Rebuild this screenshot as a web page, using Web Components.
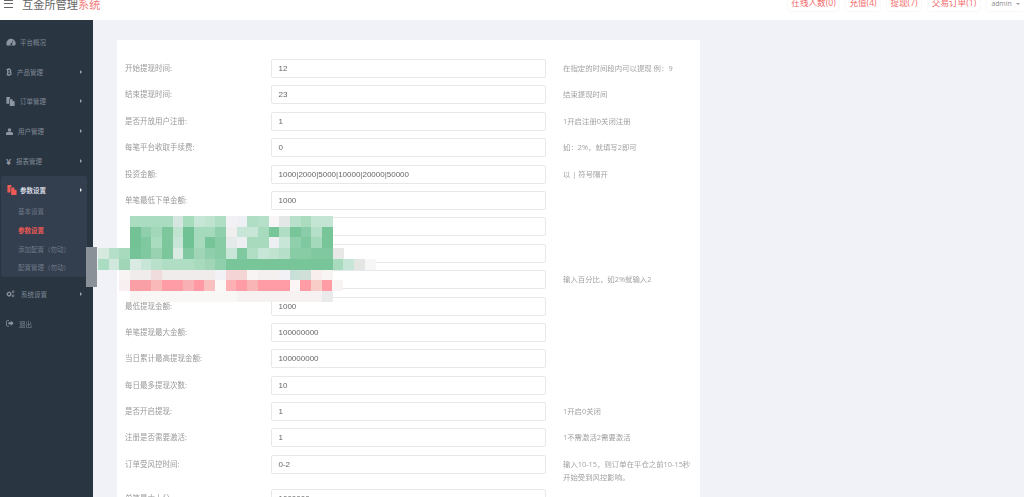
<!DOCTYPE html>
<html lang="zh">
<head>
<meta charset="utf-8">
<title>互金所管理系统</title>
<style>
  html, body { margin: 0; height: 100%; overflow: hidden; background: #f0f2f7; }
  body { font-family: "Open Sans", "Noto Sans CJK SC", sans-serif; }
</style>
</head>
<body>
<admin-app></admin-app>

<script>
const SANS = `"Open Sans", "Noto Sans CJK SC", sans-serif`;

const icons = {
  gauge: `<svg viewBox="0 0 12 10"><path fill="currentColor" fill-rule="evenodd" d="M6 1a5.6 5.6 0 0 0-5.6 5.6c0 1 .3 1.8.7 2.4h9.8c.4-.6.7-1.4.7-2.4A5.6 5.6 0 0 0 6 1zM6.600 6.200 8.400 3l.6.4-1.700 3.200a1.200 1.200 0 1 1-.7-.4z"/></svg>`,
  bitcoin: `<svg viewBox="0 0 8 11"><path fill="currentColor" fill-rule="evenodd" d="M2.400 0h1v1.200h.8V0h1v1.300c1.200.3 2 1 2 2.200 0 .8-.4 1.400-1 1.700.9.3 1.500 1 1.500 2 0 1.400-1 2.300-2.500 2.400V11h-1V9.700h-.8V11h-1V9.700H.6V8.500h.8v-6H.6V1.200h1.800zM3 2.700v2.100h1.500c.7 0 1.100-.4 1.100-1s-.4-1.100-1.100-1.100zm0 3.300v2.400h1.800c.8 0 1.200-.5 1.200-1.200S5.600 6 4.800 6z"/></svg>`,
  files: `<svg viewBox="0 0 12 12"><path fill="currentColor" d="M.5 0h4.800v2.500H4.200V9H.5zM5 3h3.500l3 3v6H5zM8.800 3.400v2.300h2.300z"/></svg>`,
  user: `<svg viewBox="0 0 11 11"><circle cx="5.500" cy="3" r="2.700" fill="currentColor"/><path fill="currentColor" d="M0 11V8.700C0 7.300 1.200 6.300 2.600 6.300h5.800c1.400 0 2.600 1 2.600 2.400V11z"/></svg>`,
  cogs: `<svg viewBox="0 0 13 11"><g fill="none" stroke="currentColor"><circle cx="4.500" cy="6" r="2.400" stroke-width="1.700"/><circle cx="10.300" cy="2.500" r="1.400" stroke-width="1.100"/><circle cx="10.300" cy="8.500" r="1.400" stroke-width="1.100"/></g><g stroke="currentColor" stroke-width="1.200"><path d="M4.500 1.900V3M4.500 9v1.100M.4 6h1.100M7.500 6h1.100M1.600 3.100l.8.8M6.600 8.100l.8.8M1.600 8.900l.8-.8M6.600 3.900l.8-.8"/></g></svg>`,
  logout: `<svg viewBox="0 0 12 10"><path fill="none" stroke="currentColor" stroke-width="1.200" d="M4.500.8H2C1.200.8.700 1.300.700 2v6c0 .7.500 1.200 1.300 1.200h2.500"/><path fill="currentColor" d="M3.500 3.500h3.600V1.200L11.700 5 7.100 8.800V6.500H3.500z"/></svg>`
};

class TopBar extends HTMLElement {
  connectedCallback() {
    const root = this.attachShadow({mode: "open"});
    const links = [["在线人数(0)", 51], ["充值(4)", 34], ["提现(7)", 34], ["交易订单(1)", 52]];
    root.innerHTML = `
      <style>
        :host { display: flex; height: 20px; background: #fff; overflow: hidden; align-items: flex-start; font-family: ${SANS}; }
        .menu { width: 9px; height: 8px; margin: 0 0 0 4px; border-top: 1.300px solid #666; border-bottom: 1.300px solid #666; box-sizing: border-box; position: relative; flex: none; }
        .menu::after { content: ""; position: absolute; left: 0; right: 0; top: 2.050px; height: 1.300px; background: #666; }
        .title { margin: -2px 0 0 9px; font-size: 11.200px; line-height: 14px; color: #666; white-space: nowrap; }
        .title b { font-weight: 400; color: #f47c7c; }
        nav { margin-left: auto; display: flex; gap: 7px; margin-top: -4px; }
        a { display: block; height: 15px; line-height: 15px; font-size: 8.600px; color: #f36a6a; text-align: center; border-radius: 2px; box-shadow: 0 0 2px rgba(0,0,0,.09); white-space: nowrap; }
        .user { width: 37px; color: #8b8b8b; font-size: 6.800px; }
        .user::after { content: ""; display: inline-block; margin-left: 4px; vertical-align: 1px; border: 2px solid transparent; border-top-color: #999; border-bottom: 0; }
      </style>
      <div class="menu"></div>
      <div class="title">互金所管理<b>系统</b></div>
      <nav>
        ${links.map(([text, w]) => `<a style="width:${w}px">${text}</a>`).join("")}
        <a class="user">admin</a>
      </nav>`;
  }
}

class SideItem extends HTMLElement {
  connectedCallback() {
    const root = this.attachShadow({mode: "open"});
    root.innerHTML = `
      <style>
        :host { display: block; height: 29.800px; color: #7f8995; font-size: 6.500px; }
        .row { display: flex; align-items: center; height: 100%; padding-left: 6px; box-sizing: border-box; }
        .ico { width: var(--ico-w, 13px); flex: none; display: flex; align-items: center; }
        .txt { margin-left: 1px; white-space: nowrap; }
        .arrow { margin-left: auto; margin-right: var(--arrow-r, 11px); border: 2px solid transparent; border-left: 2.500px solid #9aa3ae; border-right: 0; }
        :host([open]) { color: #d7dbe1; font-weight: 700; }
        :host([open]) .arrow { border-left-color: #e8eaee; }
      </style>
      <div class="row">
        <span class="ico"><slot name="icon"></slot></span>
        <span class="txt"><slot></slot></span>
        ${this.hasAttribute("arrow") ? `<i class="arrow"></i>` : ""}
      </div>`;
  }
}

class SideBar extends HTMLElement {
  connectedCallback() {
    const root = this.attachShadow({mode: "open"});
    const icon = (name, w) => `<span slot="icon" style="display:block;width:${w}px;color:#8d96a1">${icons[name]}</span>`;
    root.innerHTML = `
      <style>
        :host { display: block; width: 93px; flex: none; background: #2a3542; padding-top: 7px; box-sizing: border-box; font-family: ${SANS}; }
        svg { display: block; width: 100%; }
        .group { margin: 0 6px 2px 1px; height: 101px; background: #333e4f; border-radius: 3px; display: block; }
        .group side-item { height: 29px; --arrow-r: 5px; }
        .sub { display: flex; flex-direction: column; padding: 0 0 0 17px; margin-top: -2px; }
        .sub span { height: 18.800px; line-height: 18.800px; font-size: 6.500px; color: #6f7a87; white-space: nowrap; }
        .sub .on { color: #ee5a55; font-weight: 700; }
      </style>
      <side-item style="--ico-w:13px">${icon("gauge", 10)}平台概况</side-item>
      <side-item arrow style="--ico-w:10px">${icon("bitcoin", 6)}产品管理</side-item>
      <side-item arrow style="--ico-w:13px">${icon("files", 9)}订单管理</side-item>
      <side-item arrow style="--ico-w:11px">${icon("user", 7)}用户管理</side-item>
      <side-item arrow style="--ico-w:9px"><span slot="icon" style="color:#8d96a1;font-size:9px;font-weight:700">¥</span>报表管理</side-item>
      <div class="group">
        <side-item open arrow style="--ico-w:12px"><span slot="icon" style="display:block;width:10px;color:#ee5a55">${icons.files}</span>参数设置</side-item>
        <div class="sub">
          <span>基本设置</span>
          <span class="on">参数设置</span>
          <span>添加配置（勿动）</span>
          <span>配置管理（勿动）</span>
        </div>
      </div>
      <side-item arrow style="--ico-w:14px">${icon("cogs", 9)}系统设置</side-item>
      <side-item style="--ico-w:12px">${icon("logout", 8)}退出</side-item>`;
  }
}

class FormRow extends HTMLElement {
  connectedCallback() {
    const root = this.attachShadow({mode: "open"});
    const label = this.getAttribute("label");
    const value = this.getAttribute("value") || "";
    root.innerHTML = `
      <style>
        :host { display: grid; grid-template-columns: 146px 275px 1fr; margin-bottom: 7.400px; }
        .lab { font-size: 7.500px; line-height: 19px; color: #9a9a9a; white-space: nowrap; }
        .val { height: 19px; box-sizing: border-box; border: 1px solid #e6e8ec; border-radius: 2px; padding-left: 6.500px; line-height: 17px; font-family: "Liberation Sans", sans-serif; font-size: 8px; color: #666; background: #fff; white-space: nowrap; overflow: hidden; }
        .hint { font-size: 7.400px; line-height: 13px; padding-top: 3px; color: #a2a2a2; margin: 0 3px -2px 17px; }
      </style>
      <div class="lab">${label ? label + ":" : ""}</div>
      <div class="val">${value}</div>
      <div class="hint"><slot></slot></div>`;
  }
}

// pixelated patch over the blanked-out rows
class MosaicPatch extends HTMLElement {
  connectedCallback() {
    const root = this.attachShadow({mode: "open"});
    const rows = [
      [216.0, 130, "a9dcc0 a9dcc0 a9dcc0 a9dcc0 d5e5df a6dcbb c8e6d7 bfe3cf b0dec4 f2f2f6 eef0f6 b0dec4 b5dfc8 f7f5f6 e3e8e6 b8e0ca abdcc0 c4e5d4 c4e5d4"],
      [226.7, 130, "72c295 90cfab a2d7b9 7ec79d c0e3d0 70c294 a6dabc a6dabc 90cfab f0eeee c8e6d7 c8e6d7 a8dbbe 78c59a b0dec4 78c59a 8accaa b5dfc8 78c59a"],
      [237.4, 130, "72c295 80c8a0 aadcc0 7ec79d c8e6d7 70c294 a8dbbe 76c498 88cca5 e4e9ea eeeff2 a8dbbe a8dbbe eeeff2 c8e6d7 90cfab 80c8a0 a4d9bb 78c59a"],
      [248.1, 98, "d5e9df b5dfc8 a8dbbe 75c398 80c8a0 98d2b1 7cc69c d8eae2 80c8a0 a0d6b7 90cfab 88cca5 c8e6d7 80c8a0 b0dec4 c8e6d7 c0e3d0 b5dfc8 88cca5 88cca5 80c8a0 80c8a0 e8e8e6"],
      [258.8, 98, "a9dcc0 d0e8dc a0d6b7 d8eae2 c8e6d7 b8e0ca b0dec4 b0dec4 b0dec4 a8dbbe a0d6b7 90cfab 78c59a 78c59a 78c59a 78c59a 78c59a 78c59a 78c59a 78c59a 78c59a 78c59a a8dbbe c8e6d7 e4e6e4 f6f6f6"],
      [269.5, 119, "f8f4f4 f0ecec f0ecec f0dcdc f0ecec f0ecec f0ecec f0ecec f0ecec f2f2f6 f4d4d4 f4d4d4 f8f4f4 f4f0f0 f4f0f0 f2f2f6 c8e0d8 d0e0d8 f8eeee f8f4f4"],
      [280.2, 119, "f8f0f0 fa9fa5 fa9fa5 fab9b9 ff9ca5 ff9ca5 f9b0b5 ff9aa5 f8c0bf fbf8f8 ffb0b5 ff9ca5 f9b5b5 ff9ca5 ff9ca5 ff9ca5 fcf5f5 ff9ca5 f8cdc8 ff9ca5 f8f4f4"],
      [290.9, 130, "f8f4f4 f9f6f6 f9f6f6 f9f6f6 f9f6f6 f9f6f6 f9f6f6 f9f6f6 f9f6f6 f9f6f6 f6f2f2 f6f2f2 f6f2f2 f6f2f2 f6f2f2 f6f2f2 f6f2f2 f6f2f2 eaeaea"]
    ];
    const h = 10.7, w = 10.67;
    const cells = rows.map(([top, left, colours]) =>
      colours.split(" ").map((c, i) =>
        `<i style="left:${left + i * w}px;top:${top}px;background:#${c}"></i>`).join("")).join("");
    root.innerHTML = `
      <style>
        :host { position: absolute; inset: 0; pointer-events: none; }
        i { position: absolute; width: ${w + 0.3}px; height: ${h + 0.3}px; }
        b { position: absolute; left: 86px; top: 247px; width: 11px; height: 40px; background: #8a9199; }
      </style>
      ${cells}<b></b>`;
  }
}

class AdminApp extends HTMLElement {
  connectedCallback() {
    const root = this.attachShadow({mode: "open"});
    root.innerHTML = `
      <style>
        :host { display: block; position: relative; width: 1024px; height: 497px; overflow: hidden; filter: blur(.55px); font-family: ${SANS}; }
        .body { display: flex; height: 477px; }
        main { flex: 1; padding: 20px 0 0 24px; }
        .card { width: 583px; height: 100%; background: #fff; padding: 19px 0 0 8px; box-sizing: border-box; overflow: hidden; }
      </style>
      <top-bar></top-bar>
      <div class="body">
        <side-bar></side-bar>
        <main><div class="card">
          <form-row label="开始提现时间" value="12">在指定的时间段内可以提现 例：9</form-row>
          <form-row label="结束提现时间" value="23">结束提现时间</form-row>
          <form-row label="是否开放用户注册" value="1">1开启注册0关闭注册</form-row>
          <form-row label="每笔平台收取手续费" value="0">如：2%，就填写2即可</form-row>
          <form-row label="投资金额" value="1000|2000|5000|10000|20000|50000">以 | 符号隔开</form-row>
          <form-row label="单笔最低下单金额" value="1000"></form-row>
          <form-row></form-row>
          <form-row></form-row>
          <form-row>输入百分比，如2%就输入2</form-row>
          <form-row label="最低提现金额" value="1000"></form-row>
          <form-row label="单笔提现最大金额" value="100000000"></form-row>
          <form-row label="当日累计最高提现金额" value="100000000"></form-row>
          <form-row label="每日最多提现次数" value="10"></form-row>
          <form-row label="是否开启提现" value="1">1开启0关闭</form-row>
          <form-row label="注册是否需要激活" value="1">1不需激活2需要激活</form-row>
          <form-row label="订单受风控时间" value="0-2">输入10-15，则订单在平仓之前10-15秒开始受到风控影响。</form-row>
          <form-row label="单笔最大上分" value="1000000"></form-row>
        </div></main>
      </div>
      <mosaic-patch></mosaic-patch>`;
  }
}

customElements.define("top-bar", TopBar);
customElements.define("side-item", SideItem);
customElements.define("side-bar", SideBar);
customElements.define("form-row", FormRow);
customElements.define("mosaic-patch", MosaicPatch);
customElements.define("admin-app", AdminApp);
</script>
</body>
</html>
